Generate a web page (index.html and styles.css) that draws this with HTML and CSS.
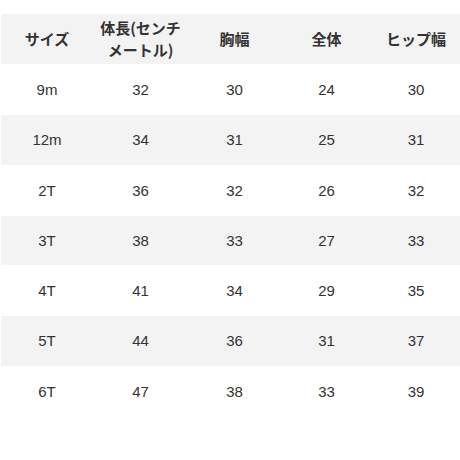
FILE: index.html
```html
<!DOCTYPE html>
<html lang="ja">
<head>
<meta charset="utf-8">
<link rel="stylesheet" href="styles.css">
</head>
<body>
<table class="size-table">
  <colgroup>
    <col class="c1"><col class="c2"><col class="c3"><col class="c4"><col class="c5">
  </colgroup>
  <thead>
    <tr class="head"><th>サイズ</th><th>体長(センチ<br>メートル)</th><th>胸幅</th><th>全体</th><th>ヒップ幅</th></tr>
  </thead>
  <tbody>
    <tr class="r-a"><td>9m</td><td>32</td><td>30</td><td>24</td><td>30</td></tr>
    <tr class="r-b alt"><td>12m</td><td>34</td><td>31</td><td>25</td><td>31</td></tr>
    <tr class="r-a"><td>2T</td><td>36</td><td>32</td><td>26</td><td>32</td></tr>
    <tr class="r-c alt"><td>3T</td><td>38</td><td>33</td><td>27</td><td>33</td></tr>
    <tr class="r-a"><td>4T</td><td>41</td><td>34</td><td>29</td><td>35</td></tr>
    <tr class="r-b alt"><td>5T</td><td>44</td><td>36</td><td>31</td><td>37</td></tr>
    <tr class="r-a"><td>6T</td><td>47</td><td>38</td><td>33</td><td>39</td></tr>
  </tbody>
</table>
</body>
</html>
```
FILE: styles.css
```css
html, body {
  margin: 0;
  padding: 0;
  background: #ffffff;
}
body {
  padding: 14px 0 0 1px;
  font-family: "Liberation Sans", "Noto Sans CJK JP", sans-serif;
  color: #333333;
}
.size-table {
  border-collapse: collapse;
  table-layout: fixed;
  width: 459px;
  font-size: 15px;
}
.c1 { width: 92px; }
.c2 { width: 95px; }
.c3 { width: 93px; }
.c4 { width: 91px; }
.c5 { width: 88px; }
.size-table th,
.size-table td {
  padding: 0;
  text-align: center;
  vertical-align: middle;
}
.size-table th {
  font-weight: bold;
  line-height: 22px;
  font-family: "Noto Sans CJK JP", "Liberation Sans", sans-serif;
}
.head {
  height: 50px;
  background: #f3f3f3;
}
.size-table td {
  line-height: 18px;
}
.r-a { height: 51px; }
.r-b { height: 50px; }
.r-c { height: 49px; }
.alt { background: #f3f3f3; }
```
